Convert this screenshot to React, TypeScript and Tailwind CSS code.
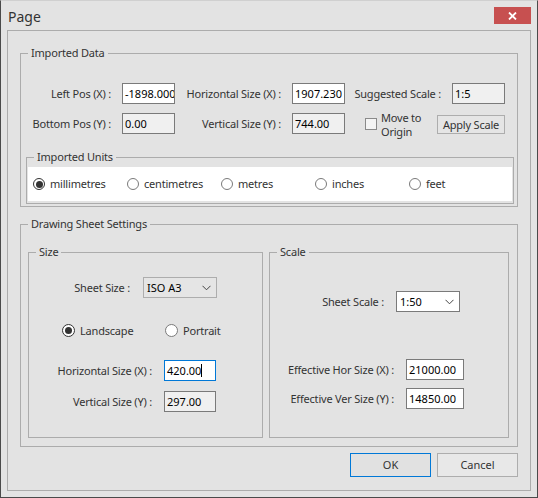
import React from "react";

function Group({
  label,
  className,
  children,
}: {
  label: string;
  className: string;
  children?: React.ReactNode;
}) {
  return (
    <div className={`relative border border-[#acacac] ${className}`}>
      <span className="absolute left-[7px] top-[-8px] px-[3px] bg-[#e3e3e3] leading-[14px] text-[#333333] whitespace-nowrap tracking-[-0.2px]">
        {label}
      </span>
      {children}
    </div>
  );
}

function Field({
  value,
  w,
  ro,
  focus,
  h = "h-[21px]",
}: {
  value: string;
  w: string;
  ro?: boolean;
  focus?: boolean;
  h?: string;
}) {
  return (
    <div
      className={`${w} ${h} shrink-0 flex items-center overflow-hidden whitespace-nowrap pl-[2px] border text-black ${
        focus ? "border-[#0078d7] bg-white" : ro ? "border-[#7a7a7a] bg-[#f0f0f0]" : "border-[#7a7a7a] bg-white"
      }`}
    >
      {value}
      {focus && <span className="w-px h-[13px] bg-black" />}
    </div>
  );
}

function Label({ text, w }: { text: string; w: string }) {
  return (
    <div className={`${w} shrink-0 text-right whitespace-nowrap text-[#333333] tracking-[-0.2px]`}>{text}</div>
  );
}

function Radio({ on, size = "w-[13px] h-[13px]" }: { on?: boolean; size?: string }) {
  return (
    <div
      className={`${size} shrink-0 rounded-full border bg-white flex items-center justify-center ${
        on ? "border-[#333333]" : "border-[#7a7a7a]"
      }`}
    >
      {on && <div className="w-[7px] h-[7px] rounded-full bg-[#333333]" />}
    </div>
  );
}

function Chevron() {
  return (
    <svg width="9" height="6" viewBox="0 0 9 6" className="shrink-0">
      <polyline points="0.5,0.8 4.5,4.8 8.5,0.8" fill="none" stroke="#444" strokeWidth="1" />
    </svg>
  );
}

function Select({ value, w, white }: { value: string; w: string; white?: boolean }) {
  return (
    <div
      className={`${w} h-[21px] shrink-0 flex items-center justify-between pl-[3px] pr-[5px] border ${
        white ? "bg-white border-[#7a7a7a]" : "bg-[#e5e5e5] border-[#adadad]"
      } text-black`}
    >
      <span>{value}</span>
      <Chevron />
    </div>
  );
}

export default function App() {
  const units = ["millimetres", "centimetres", "metres", "inches", "feet"];
  return (
    <div className="w-[538px] h-[498px] bg-[#e3e3e3] border border-[#4a4a4a] border-t-[#d0d0d0] flex flex-col font-['Noto_Sans',sans-serif] text-[11px] leading-[14px] text-[#333333] overflow-hidden">
      {/* title bar */}
      <div className="h-[29px] shrink-0 flex items-start justify-between">
        <div className="pl-[7px] pt-[7px] text-[14px] leading-[18px] text-[#333333]">Page</div>
        <div className="mt-[6px] mr-[6px] w-[37px] h-[17px] bg-[#c75050] flex items-center justify-center">
          <svg width="9" height="8" viewBox="0 0 9 8">
            <path d="M1 0.5 L8 7.5 M8 0.5 L1 7.5" stroke="white" strokeWidth="1.8" />
          </svg>
        </div>
      </div>

      {/* main panel */}
      <div className="ml-[6px] w-[524px] h-[461px] border border-[#acacac] pl-[12px] pt-[22px] flex flex-col">
        {/* Imported Data */}
        <Group label="Imported Data" className="w-[498px] h-[154px] shrink-0">
          <div className="flex flex-col pt-[29px]">
            <div className="flex items-center h-[21px]">
              <Label text="Left Pos (X) :" w="w-[90px]" />
              <div className="ml-[11px]">
                <Field value="-1898.000" w="w-[53px]" />
              </div>
              <Label text="Horizontal Size (X) :" w="w-[106px]" />
              <div className="ml-[11px]">
                <Field value="1907.230" w="w-[53px]" />
              </div>
              <Label text="Suggested Scale :" w="w-[96px]" />
              <div className="ml-[11px]">
                <Field value="1:5" w="w-[53px]" ro />
              </div>
            </div>
            <div className="flex items-center h-[21px] mt-[9px]">
              <Label text="Bottom Pos (Y) :" w="w-[90px]" />
              <div className="ml-[11px]">
                <Field value="0.00" w="w-[53px]" ro />
              </div>
              <Label text="Vertical Size (Y) :" w="w-[106px]" />
              <div className="ml-[11px]">
                <Field value="744.00" w="w-[53px]" ro />
              </div>
              <div className="ml-[20px] w-[12px] h-[12px] shrink-0 border border-[#8a8a8a] bg-[#f4f4f4]" />
              <div className="ml-[4px] w-[52px] mr-[4px] shrink-0 flex flex-col pt-[2px] text-[#333333] tracking-[-0.2px]">
                <span className="leading-[14px]">Move to</span>
                <span className="leading-[14px]">Origin</span>
              </div>
              <div className="w-[68px] h-[19px] mt-[2px] shrink-0 border border-[#adadad] bg-[#e5e5e5] flex items-center justify-center text-[#333333] whitespace-nowrap tracking-[-0.2px]">
                Apply Scale
              </div>
            </div>
            <Group label="Imported Units" className="ml-[5px] mt-[23px] w-[488px] h-[47px]">
              <div className="ml-[1px] mt-[9px] w-[484px] h-[34px] bg-white flex items-center pl-[5px]">
                {units.map((u, i) => (
                  <div key={u} className="w-[94px] shrink-0 flex items-center gap-[5px]">
                    <Radio on={i === 0} size="w-[12px] h-[12px]" />
                    <span className="text-[#333333] tracking-[-0.2px]">{u}</span>
                  </div>
                ))}
              </div>
            </Group>
          </div>
        </Group>

        {/* Drawing Sheet Settings */}
        <Group label="Drawing Sheet Settings" className="mt-[17px] w-[498px] h-[223px] shrink-0">
          <div className="flex pl-[7px] pt-[27px] gap-[6px]">
            <Group label="Size" className="w-[235px] h-[186px] shrink-0">
              <div className="flex flex-col pt-[24px]">
                <div className="flex items-center h-[21px]">
                  <Label text="Sheet Size :" w="w-[101px]" />
                  <div className="ml-[13px]">
                    <Select value="ISO A3" w="w-[74px]" />
                  </div>
                </div>
                <div className="flex items-center h-[13px] mt-[26px] pl-[33px] tracking-[-0.2px]">
                  <div className="w-[103px] shrink-0 flex items-center gap-[5px]">
                    <Radio on />
                    <span>Landscape</span>
                  </div>
                  <div className="flex items-center gap-[5px]">
                    <Radio />
                    <span>Portrait</span>
                  </div>
                </div>
                <div className="flex items-center h-[21px] mt-[23px]">
                  <Label text="Horizontal Size (X) :" w="w-[123px]" />
                  <div className="ml-[12px]">
                    <Field value="420.00" w="w-[52px]" focus />
                  </div>
                </div>
                <div className="flex items-center h-[21px] mt-[10px]">
                  <Label text="Vertical Size (Y) :" w="w-[123px]" />
                  <div className="ml-[12px]">
                    <Field value="297.00" w="w-[52px]" ro />
                  </div>
                </div>
              </div>
            </Group>
            <Group label="Scale" className="w-[240px] h-[186px] shrink-0">
              <div className="flex flex-col pt-[38px]">
                <div className="flex items-center h-[21px]">
                  <Label text="Sheet Scale :" w="w-[114px]" />
                  <div className="ml-[12px]">
                    <Select value="1:50" w="w-[64px]" white />
                  </div>
                </div>
                <div className="flex items-center h-[21px] mt-[47px]">
                  <Label text="Effective Hor Size (X) :" w="w-[124px]" />
                  <div className="ml-[12px]">
                    <Field value="21000.00" w="w-[58px]" />
                  </div>
                </div>
                <div className="flex items-center h-[21px] mt-[8px]">
                  <Label text="Effective Ver Size (Y) :" w="w-[124px]" />
                  <div className="ml-[12px]">
                    <Field value="14850.00" w="w-[58px]" />
                  </div>
                </div>
              </div>
            </Group>
          </div>
        </Group>

        {/* buttons */}
        <div className="mt-[6px] w-[498px] flex justify-end gap-[6px]">
          <div className="w-[81px] h-[24px] border border-[#0078d7] bg-[#e1e1e1] flex items-center justify-center text-[#333333]">
            OK
          </div>
          <div className="w-[81px] h-[24px] border border-[#adadad] bg-[#e8e8e8] flex items-center justify-center text-[#333333]">
            Cancel
          </div>
        </div>
      </div>
    </div>
  );
}
